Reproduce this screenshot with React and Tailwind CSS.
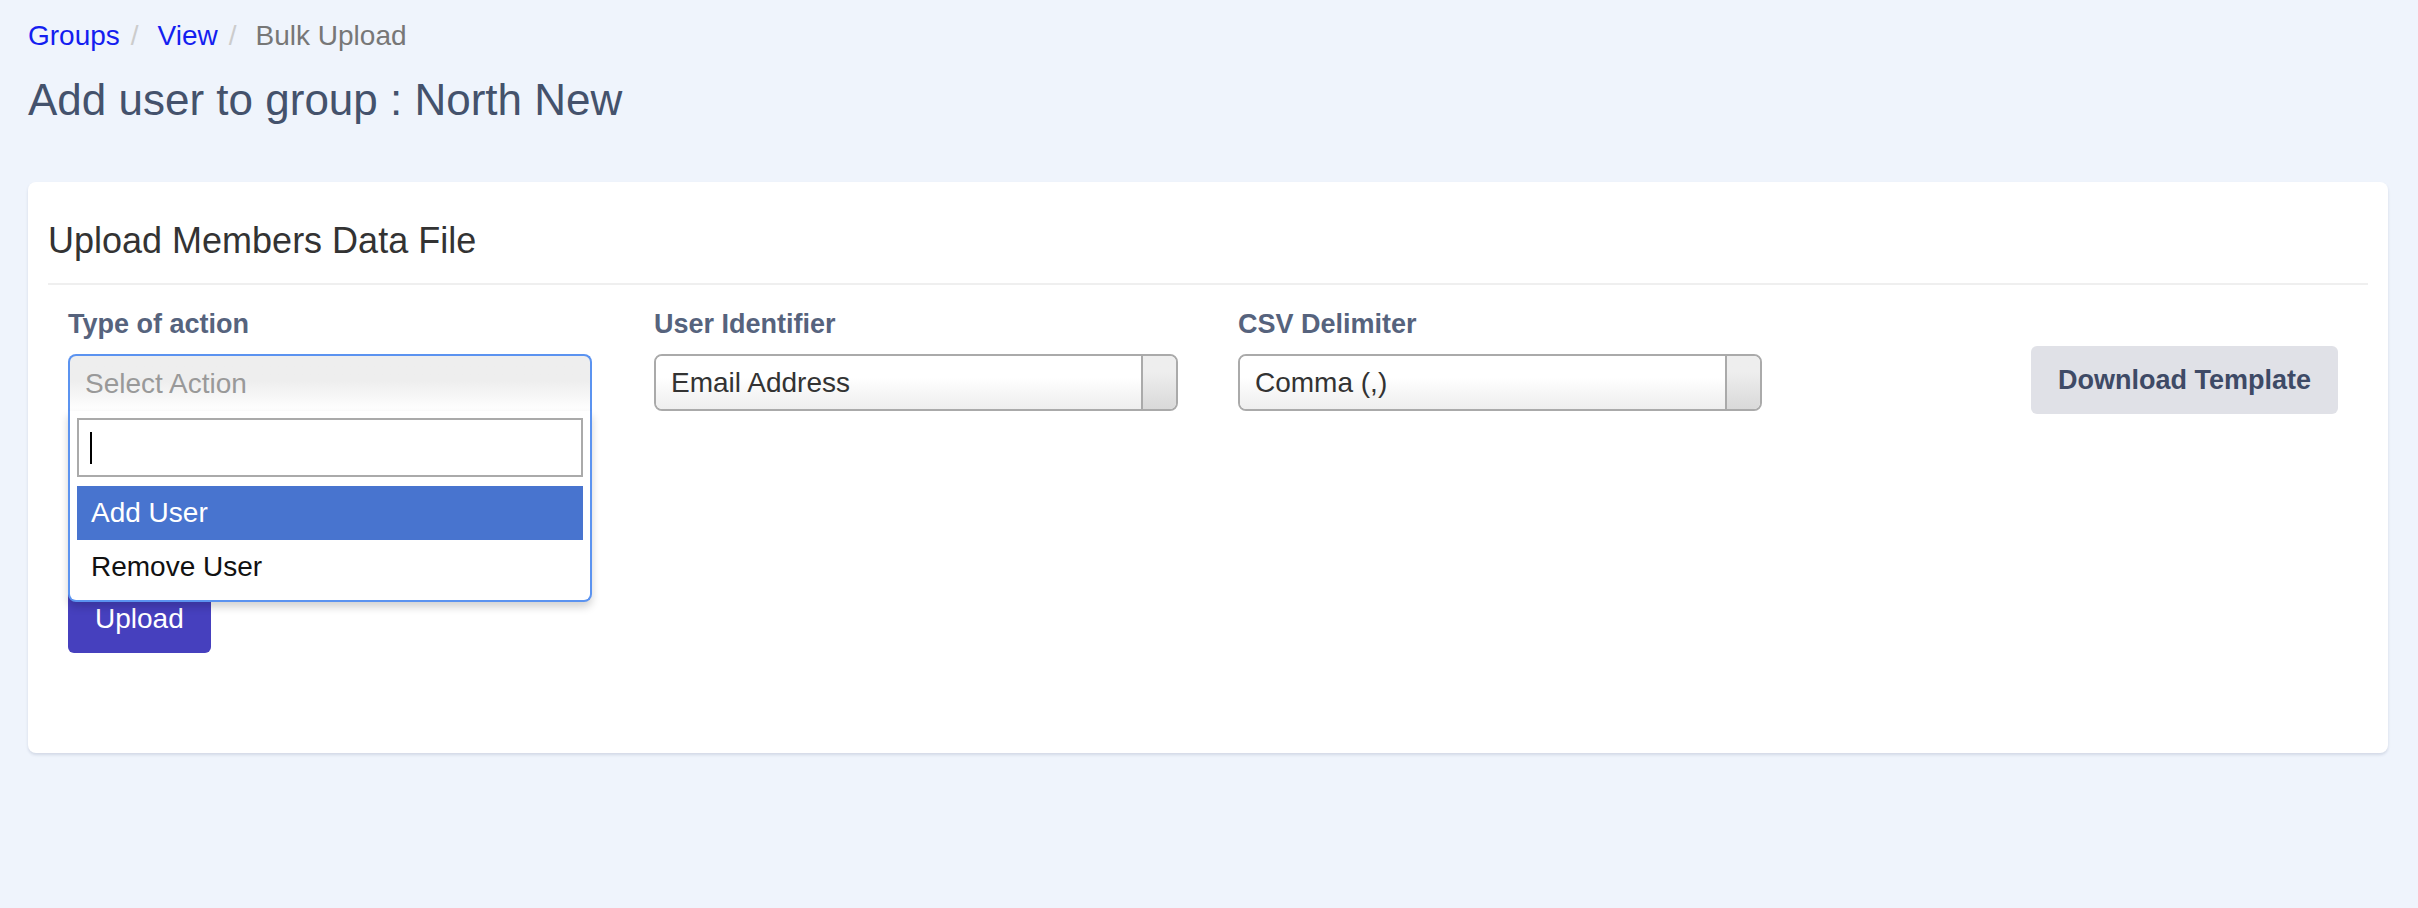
import React from "react";

const font = { fontFamily: '"Liberation Sans", Arial, Helvetica, sans-serif' };

function Crumb({ children, active }) {
  return (
    <span className={active ? "text-[#777777]" : "text-[#141ef0]"}>
      {children}
    </span>
  );
}

function Slash() {
  return <span className="ml-[11px] mr-[19px] text-[#cccccc]">/</span>;
}

function ClosedSelect({ value }) {
  return (
    <div className="flex h-[57px] w-[524px] overflow-hidden rounded-[8px] border-2 border-[#aaaaaa]">
      <div className="flex flex-1 items-center bg-linear-to-b from-white from-40% to-[#eeeeee] pl-[15px] text-[28px] leading-[32px] text-[#333333]">
        {value}
      </div>
      <div className="w-[35px] border-l-2 border-[#aaaaaa] bg-linear-to-b from-[#eeeeee] from-30% to-[#d9d9d9]" />
    </div>
  );
}

function OpenSelect() {
  return (
    <div className="relative w-[524px]">
      <div className="flex h-[57px] items-center rounded-t-[8px] border-2 border-b-0 border-[#5b93f0] bg-linear-to-b from-[#eeeeee] from-45% to-white pl-[15px] text-[28px] leading-[32px] text-[#999999]">
        Select Action
      </div>
      {/* dropdown */}
      <div className="absolute left-0 right-0 top-full z-10 rounded-b-[8px] border-2 border-t-0 border-[#5b93f0] bg-white px-[7px] pb-[6px] pt-[7px] shadow-[0_5px_8px_rgba(0,0,0,0.18)]">
        <div className="flex h-[59px] items-center border-2 border-[#aaaaaa] pl-[11px]">
          <span className="h-[32px] w-[2px] bg-black" />
        </div>
        <ul className="mt-[9px]">
          <li className="flex h-[54px] items-center bg-[#4874cf] pl-[14px] text-[28px] text-white">
            Add User
          </li>
          <li className="flex h-[54px] items-center pl-[14px] text-[28px] text-[#111111]">
            Remove User
          </li>
        </ul>
      </div>
    </div>
  );
}

function Field({ label, children, className = "" }) {
  return (
    <div className={`w-[524px] ${className}`}>
      <div className="text-[27px] font-bold leading-[39px] text-[#56637d]">
        {label}
      </div>
      <div className="mt-[10px]">{children}</div>
    </div>
  );
}

export default function App() {
  return (
    <div
      className="min-h-screen bg-[#eff4fc] pb-[60px] pl-[28px] pr-[30px] pt-[16px]"
      style={font}
    >
      {/* Breadcrumb */}
      <nav className="flex text-[28px] leading-[40px]">
        <Crumb>Groups</Crumb>
        <Slash />
        <Crumb>View</Crumb>
        <Slash />
        <Crumb active>Bulk Upload</Crumb>
      </nav>

      <h1 className="mt-[20px] text-[44px] leading-[48px] text-[#44526c]">
        Add user to group : North New
      </h1>

      {/* Card */}
      <section className="mt-[58px] rounded-[8px] bg-white px-[20px] pb-[100px] pt-[37px] shadow-[0_2px_3px_rgba(40,60,100,0.14)]">
        <h2 className="mb-[20px] text-[36px] leading-[44px] text-[#333333]">
          Upload Members Data File
        </h2>
        <div className="h-[2px] bg-[#efefef]" />

        <div className="mt-[20px] flex items-start pl-[20px] pr-[30px]">
          <Field label="Type of action">
            <OpenSelect />
          </Field>
          <Field label="User Identifier" className="ml-[62px]">
            <ClosedSelect value="Email Address" />
          </Field>
          <Field label="CSV Delimiter" className="ml-[60px]">
            <ClosedSelect value="Comma (,)" />
          </Field>
          <button className="ml-auto mt-[41px] h-[68px] rounded-[6px] bg-[#e0e1e7] px-[27px] text-[27px] font-bold text-[#3e4a66]">
            Download Template
          </button>
        </div>

        <div className="mt-[171px] pl-[20px]">
          <button className="h-[68px] rounded-[6px] bg-[#4640be] px-[27px] text-[28px] text-white">
            Upload
          </button>
        </div>
      </section>
    </div>
  );
}
